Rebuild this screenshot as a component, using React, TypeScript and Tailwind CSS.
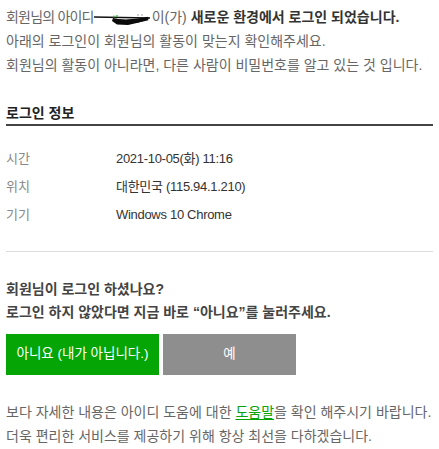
import React from 'react'

const font = { fontFamily: '"Liberation Sans", "Noto Sans CJK KR", sans-serif' }

function Scribble() {
  // black marker scribble hiding the member id
  return (
    <svg width="58" height="16" viewBox="0 0 58 16" className="inline-block align-[-4px]">
      <path d="M0 7 L56 8" stroke="#111" strokeWidth="1.5" fill="none" />
      <path d="M19 8 L18 11 L23 14.5 L34 15 L45 12.5 L53 9.5 L56 7.5 L44 8.5 L32 9.5 L24 9 Z" fill="#0b0b0b" />
      <path d="M21 10.5 C30 13 42 11.5 54 8.5" stroke="#0b0b0b" strokeWidth="3.5" fill="none" />
      <circle cx="20" cy="6.5" r="0.9" fill="#4caf50" />
      <circle cx="23" cy="6" r="0.9" fill="#4caf50" />
      <circle cx="44" cy="5" r="0.8" fill="#999" />
      <circle cx="48" cy="5" r="0.8" fill="#999" />
    </svg>
  )
}

const rows = [
  { label: '시간', value: '2021-10-05(화) 11:16' },
  { label: '위치', value: '대한민국 (115.94.1.210)' },
  { label: '기기', value: 'Windows 10 Chrome' },
]

export default function App() {
  return (
    <div className="w-[439px] h-[449px] bg-white px-[6px] overflow-hidden" style={font}>
      {/* intro */}
      <div className="pt-[5px] text-[14px] leading-6 text-[#666] whitespace-nowrap">
        <p>
          <span className="tracking-[-0.8px]">회원님의 아이디</span>
          <Scribble />
          이(가) <b className="text-[#333] font-bold">새로운 환경에서 로그인 되었습니다.</b>
        </p>
        <p>아래의 로그인이 회원님의 활동이 맞는지 확인해주세요.</p>
        <p>회원님의 활동이 아니라면, 다른 사람이 비밀번호를 알고 있는 것 입니다.</p>
      </div>

      {/* login info */}
      <h2 className="mt-[25px] text-[14px] leading-[22px] font-bold text-[#222] border-b-2 border-[#444]">
        로그인 정보
      </h2>
      <div className="pt-[19px] text-[13px]">
        {rows.map((row) => (
          <div key={row.label} className="flex h-7 items-center">
            <span className="w-[110px] text-[#888]">{row.label}</span>
            <span className="text-[#333] tracking-[-0.3px]">{row.value}</span>
          </div>
        ))}
      </div>

      <div className="mt-[22px] h-px bg-[#dcdcdc]" />

      {/* question */}
      <div className="mt-[26px] text-[14px] leading-[23px] font-bold text-[#444] whitespace-nowrap">
        <p>회원님이 로그인 하셨나요?</p>
        <p>로그인 하지 않았다면 지금 바로 “아니요”를 눌러주세요.</p>
      </div>

      <div className="mt-[10px] flex gap-1 text-[13.5px]">
        <button className="w-[153px] h-[41px] bg-[#04a504] text-white">아니요 (내가 아닙니다.)</button>
        <button className="w-[133px] h-[41px] bg-[#8e8e8e] text-white">예</button>
      </div>

      {/* footer */}
      <div className="mt-[25px] text-[14px] leading-6 text-[#666] whitespace-nowrap">
        <p>
          보다 자세한 내용은 아이디 도움에 대한{' '}
          <a className="text-[#08a308] underline underline-offset-2">도움말</a>을 확인 해주시기 바랍니다.
        </p>
        <p>더욱 편리한 서비스를 제공하기 위해 항상 최선을 다하겠습니다.</p>
      </div>
    </div>
  )
}
